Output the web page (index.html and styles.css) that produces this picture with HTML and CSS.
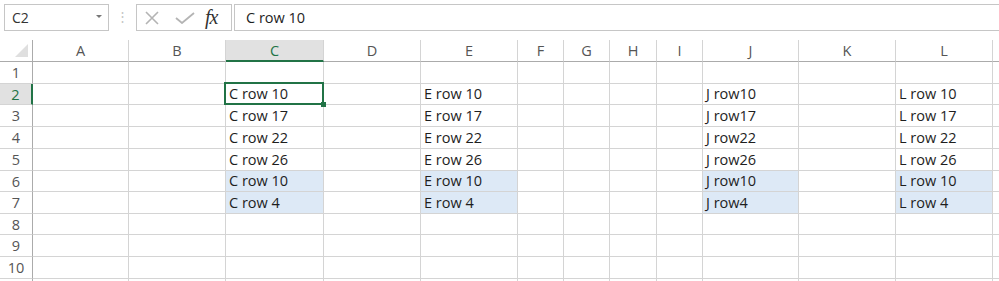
FILE: index.html
```html
<!doctype html>
<html lang="en">
  <head>
    <meta charset="UTF-8" />
    <title>Book1 - Excel</title>
    <link rel="stylesheet" href="styles.css">
  </head>
  <body>
    <div class="formula-bar">
      <div class="name-box">
        <span>C2</span>
        <span class="caret"></span>
      </div>
      <div class="grip">⋮</div>
      <div class="fx-box">
        <svg class="icon" width="16" height="14" viewBox="0 0 16 14">
          <path d="M2 1 L14 13 M14 1 L2 13" stroke="#b4b4b4" stroke-width="1.6" fill="none" />
        </svg>
        <svg class="icon" width="20" height="12" viewBox="0 0 20 12">
          <path d="M1 6 L7 11 L19 1" stroke="#b4b4b4" stroke-width="1.8" fill="none" />
        </svg>
        <span class="fx">fx</span>
      </div>
      <div class="formula">C row 10</div>
    </div>

    <div class="sheet">
      <!-- column headers -->
      <div class="corner"><span class="tri"></span></div>
      <div class="col-head">A</div>
      <div class="col-head">B</div>
      <div class="col-head sel">C</div>
      <div class="col-head">D</div>
      <div class="col-head">E</div>
      <div class="col-head">F</div>
      <div class="col-head">G</div>
      <div class="col-head">H</div>
      <div class="col-head">I</div>
      <div class="col-head">J</div>
      <div class="col-head">K</div>
      <div class="col-head">L</div>
      <div class="col-head"></div>

      <!-- row 1 -->
      <div class="row-head">1</div>
      <div class="cell"></div><div class="cell"></div><div class="cell"></div><div class="cell"></div>
      <div class="cell"></div><div class="cell"></div><div class="cell"></div><div class="cell"></div>
      <div class="cell"></div><div class="cell"></div><div class="cell"></div><div class="cell"></div>
      <div class="cell"></div>

      <!-- row 2 -->
      <div class="row-head sel">2</div>
      <div class="cell"></div><div class="cell"></div>
      <div class="cell active">C row 10</div>
      <div class="cell"></div>
      <div class="cell">E row 10</div>
      <div class="cell"></div><div class="cell"></div><div class="cell"></div><div class="cell"></div>
      <div class="cell">J row10</div>
      <div class="cell"></div>
      <div class="cell">L row 10</div>
      <div class="cell"></div>

      <!-- row 3 -->
      <div class="row-head">3</div>
      <div class="cell"></div><div class="cell"></div>
      <div class="cell">C row 17</div>
      <div class="cell"></div>
      <div class="cell">E row 17</div>
      <div class="cell"></div><div class="cell"></div><div class="cell"></div><div class="cell"></div>
      <div class="cell">J row17</div>
      <div class="cell"></div>
      <div class="cell">L row 17</div>
      <div class="cell"></div>

      <!-- row 4 -->
      <div class="row-head">4</div>
      <div class="cell"></div><div class="cell"></div>
      <div class="cell">C row 22</div>
      <div class="cell"></div>
      <div class="cell">E row 22</div>
      <div class="cell"></div><div class="cell"></div><div class="cell"></div><div class="cell"></div>
      <div class="cell">J row22</div>
      <div class="cell"></div>
      <div class="cell">L row 22</div>
      <div class="cell"></div>

      <!-- row 5 -->
      <div class="row-head">5</div>
      <div class="cell"></div><div class="cell"></div>
      <div class="cell">C row 26</div>
      <div class="cell"></div>
      <div class="cell">E row 26</div>
      <div class="cell"></div><div class="cell"></div><div class="cell"></div><div class="cell"></div>
      <div class="cell">J row26</div>
      <div class="cell"></div>
      <div class="cell">L row 26</div>
      <div class="cell"></div>

      <!-- row 6 -->
      <div class="row-head">6</div>
      <div class="cell"></div><div class="cell"></div>
      <div class="cell hl">C row 10</div>
      <div class="cell"></div>
      <div class="cell hl">E row 10</div>
      <div class="cell"></div><div class="cell"></div><div class="cell"></div><div class="cell"></div>
      <div class="cell hl">J row10</div>
      <div class="cell"></div>
      <div class="cell hl">L row 10</div>
      <div class="cell"></div>

      <!-- row 7 -->
      <div class="row-head">7</div>
      <div class="cell"></div><div class="cell"></div>
      <div class="cell hl">C row 4</div>
      <div class="cell"></div>
      <div class="cell hl">E row 4</div>
      <div class="cell"></div><div class="cell"></div><div class="cell"></div><div class="cell"></div>
      <div class="cell hl">J row4</div>
      <div class="cell"></div>
      <div class="cell hl">L row 4</div>
      <div class="cell"></div>

      <!-- row 8 -->
      <div class="row-head">8</div>
      <div class="cell"></div><div class="cell"></div><div class="cell"></div><div class="cell"></div>
      <div class="cell"></div><div class="cell"></div><div class="cell"></div><div class="cell"></div>
      <div class="cell"></div><div class="cell"></div><div class="cell"></div><div class="cell"></div>
      <div class="cell"></div>

      <!-- row 9 -->
      <div class="row-head">9</div>
      <div class="cell"></div><div class="cell"></div><div class="cell"></div><div class="cell"></div>
      <div class="cell"></div><div class="cell"></div><div class="cell"></div><div class="cell"></div>
      <div class="cell"></div><div class="cell"></div><div class="cell"></div><div class="cell"></div>
      <div class="cell"></div>

      <!-- row 10 -->
      <div class="row-head">10</div>
      <div class="cell"></div><div class="cell"></div><div class="cell"></div><div class="cell"></div>
      <div class="cell"></div><div class="cell"></div><div class="cell"></div><div class="cell"></div>
      <div class="cell"></div><div class="cell"></div><div class="cell"></div><div class="cell"></div>
      <div class="cell"></div>

      <!-- row 11, only its top edge shows -->
      <div class="row-head"></div>
      <div class="cell"></div><div class="cell"></div><div class="cell"></div><div class="cell"></div>
      <div class="cell"></div><div class="cell"></div><div class="cell"></div><div class="cell"></div>
      <div class="cell"></div><div class="cell"></div><div class="cell"></div><div class="cell"></div>
      <div class="cell"></div>
    </div>
  </body>
</html>
```

FILE: styles.css
```css
html,
body {
  margin: 0;
  height: 281px;
  overflow: hidden;
  background-color: white;
  font-family: "Open Sans", "Noto Sans", sans-serif;
  font-size: 14px;
  color: #1e1e1e;
}
.formula-bar {
  display: flex;
  align-items: stretch;
  height: 27px;
  padding: 4px 0 0 4px;
  margin-bottom: 9px;
}
.name-box {
  width: 105px;
  box-sizing: border-box;
  border: 1px solid #c6c6c6;
  display: flex;
  align-items: center;
  justify-content: space-between;
  padding: 0 6px 0 7px;
  color: #333;
}
.caret {
  width: 0;
  height: 0;
  border-left: 3px solid transparent;
  border-right: 3px solid transparent;
  border-top: 3px solid #777;
  margin-bottom: 3px;
}
.grip {
  width: 27px;
  text-align: center;
  color: #c4c4c4;
  font-size: 13px;
  line-height: 25px;
}
.fx-box {
  width: 96px;
  box-sizing: border-box;
  border: 1px solid #c6c6c6;
  display: flex;
  align-items: center;
  gap: 14px;
  padding-left: 7px;
}
.fx-box .icon + .icon {
  margin-left: 1px;
}
.fx {
  font-family: "Liberation Serif", "DejaVu Serif", serif;
  font-style: italic;
  font-size: 20px;
  color: #333;
  margin-left: -4px;
  letter-spacing: -1px;
}
.formula {
  flex: 1;
  margin-left: 2px;
  border: 1px solid #c6c6c6;
  border-right: none;
  display: flex;
  align-items: center;
  padding-left: 11px;
  font-size: 14.5px;
}
.sheet {
  display: grid;
  grid-template-columns: 33px 96px 97px 98px 97px 97px 46px 46px 47px 46px 96px 97px 97px 1fr;
  grid-template-rows: 22px 22px 21px 22px 22px 22px 21px 22px 21px 22px 22px 22px;
}
.corner,
.col-head,
.row-head,
.cell {
  box-sizing: border-box;
  border-right: 1px solid #d4d4d4;
  border-bottom: 1px solid #d4d4d4;
}
.corner {
  position: relative;
  border-right-color: #ababab;
  border-bottom-color: #ababab;
}
.tri {
  position: absolute;
  right: 4px;
  bottom: 4px;
  width: 0;
  height: 0;
  border-left: 13px solid transparent;
  border-bottom: 13px solid #dfdfdf;
}
.col-head {
  display: flex;
  align-items: center;
  justify-content: center;
  color: #555;
  font-size: 14.5px;
  border-bottom-color: #ababab;
}
.col-head.sel {
  background-color: #e1e1e1;
  color: #217346;
  border-bottom: 2px solid #217346;
}
.row-head {
  display: flex;
  align-items: center;
  justify-content: center;
  color: #555;
  font-size: 14.5px;
  border-right-color: #ababab;
}
.row-head.sel {
  background-color: #e1e1e1;
  color: #217346;
  border-right: 2px solid #217346;
}
.cell {
  display: flex;
  align-items: flex-end;
  padding: 0 3px 1px;
  line-height: 18px;
  font-size: 14.5px;
  white-space: nowrap;
}
.cell.hl {
  background-color: #dde9f6;
}
.cell.active {
  position: relative;
}
.cell.active::after {
  content: "";
  position: absolute;
  left: -2px;
  top: -2px;
  right: -1px;
  bottom: -1px;
  border: 2px solid #217346;
}
.cell.active::before {
  content: "";
  position: absolute;
  right: -3px;
  bottom: -3px;
  width: 5px;
  height: 5px;
  background-color: #217346;
  z-index: 1;
}
```
